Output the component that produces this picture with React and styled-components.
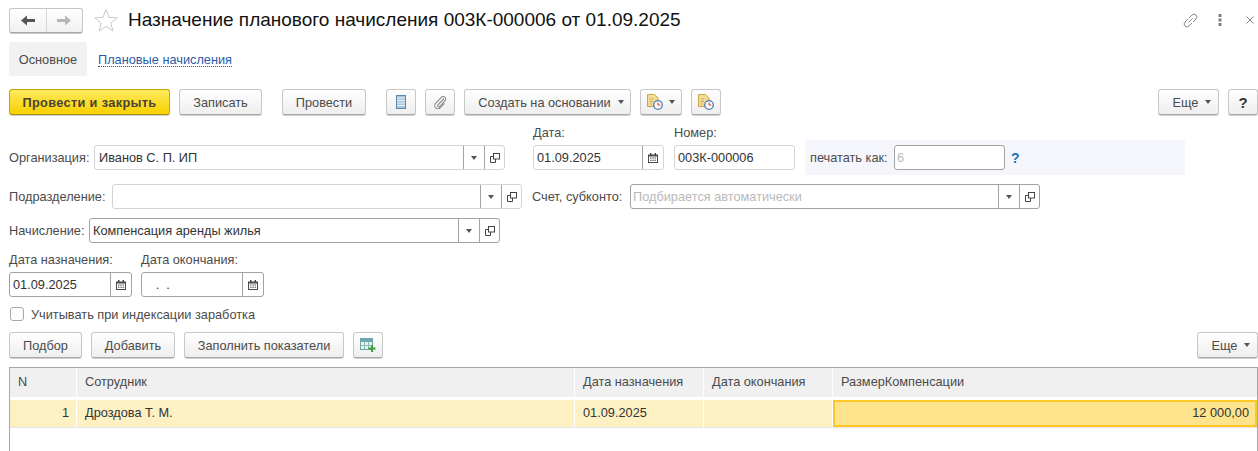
import React from 'react';
import styled, { createGlobalStyle } from 'styled-components';

const GlobalStyle = createGlobalStyle`
  html, body {
    margin: 0;
    height: 451px;
    overflow: hidden;
    background: #fff;
  }
  body {
    font-family: "Liberation Sans", Arial, sans-serif;
    font-size: 12.75px;
    color: #4b4b4b;
  }
  * { box-sizing: border-box; }
`;

const Page = styled.div`
  width: 1258px;
  height: 451px;
  padding-left: 9px;
  overflow: hidden;
`;

const TitleBar = styled.div`
  display: flex;
  align-items: center;
  height: 26px;
  margin-top: 7px;
`;

const NavGroup = styled.div`
  display: flex;
  width: 74px;
  height: 25px;
  border: 1px solid #c6c6c6;
  border-bottom-color: #a8a8a8;
  border-radius: 3px;
  background: linear-gradient(#ffffff, #f0f0f0);
  box-shadow: 0 1px 0 #c8c8c8;
`;

const NavButton = styled.div`
  flex: 1;
  display: flex;
  align-items: center;
  justify-content: center;
  & + & { border-left: 1px solid #d6d6d6; }
`;

const StarWrap = styled.div`
  display: flex;
  margin: 0 10px 0 11px;
`;

const Title = styled.h1`
  margin: 0;
  font-size: 19px;
  font-weight: 400;
  color: #111;
  white-space: nowrap;
`;

const WindowActions = styled.div`
  margin-left: auto;
  display: flex;
  align-items: center;
  gap: 19px;
  padding-right: 4px;
`;

const CloseWrap = styled.div`
  display: flex;
  margin-left: 5px;
`;

const Tabs = styled.div`
  display: flex;
  align-items: center;
  margin-top: 9px;
  height: 34px;
`;

const ActiveTab = styled.div`
  width: 78px;
  height: 34px;
  padding-top: 1px;
  display: flex;
  align-items: center;
  justify-content: center;
  background: #f1f1f1;
  border-radius: 3px;
`;

const TabLink = styled.a`
  margin: 2px 0 0 11px;
  color: #2a5ba8;
  border-bottom: 1px dotted #2a5ba8;
  line-height: 13px;
`;

const Toolbar = styled.div`
  display: flex;
  gap: 9px;
  margin-top: ${p => p.$top}px;
  height: 26px;
`;

const Button = styled.div`
  width: ${p => p.$w}px;
  height: 26px;
  flex: none;
  display: flex;
  align-items: center;
  justify-content: center;
  gap: ${p => p.$gap || 0}px;
  margin-left: ${p => p.$ml || '0'};
  padding-left: ${p => p.$pl || 0}px;
  border: 1px solid #c8c8c8;
  border-bottom-color: #a9a9a9;
  border-radius: 3px;
  background: linear-gradient(#ffffff, #eeeeee);
  box-shadow: 0 1px 0 #cfcfcf;
  white-space: nowrap;
`;

const PrimaryButton = styled(Button)`
  border-color: #c3a800;
  border-bottom-color: #a8920c;
  background: linear-gradient(#fdea5e, #f8d000);
  font-weight: 700;
  color: #4a4430;
  letter-spacing: 0.35px;
`;

const HelpMark = styled.span`
  font-size: 15px;
  font-weight: 700;
  color: #333;
`;

const Row = styled.div`
  display: flex;
  align-items: ${p => p.$align || 'center'};
  margin-top: ${p => p.$top}px;
`;

const Group = styled.div`
  display: flex;
  align-items: center;
`;

const Label = styled.span`
  flex: none;
  width: ${p => p.$w}px;
  white-space: nowrap;
  margin-left: ${p => p.$ml || 0}px;
`;

const Stack = styled.div`
  display: flex;
  flex-direction: column;
  gap: 4px;
  margin-left: ${p => p.$ml || 0}px;
`;

const StackLabel = styled.span`
  height: 16px;
  line-height: 16px;
`;

const FieldBox = styled.div`
  display: flex;
  flex: none;
  width: ${p => p.$w}px;
  height: 25px;
  border: 1px solid ${p => (p.$dark ? '#a3a3a3' : '#d4d4d4')};
  border-radius: 3px;
  background: #fff;
`;

const FieldValue = styled.div`
  flex: 1;
  min-width: 0;
  padding-left: ${p => p.$pad ?? 3}px;
  line-height: 23px;
  white-space: pre;
  color: ${p => (p.$hint ? '#b9b9b9' : '#333')};
`;

const FieldButton = styled.div`
  flex: none;
  width: ${p => p.$w}px;
  display: flex;
  align-items: center;
  justify-content: center;
  border-left: 1px solid #a3a3a3;
`;

const PrintPanel = styled.div`
  display: flex;
  align-items: center;
  width: 380px;
  height: 35px;
  margin: 0 0 -5px 10px;
  padding-left: 5px;
  background: #f5f6fc;
`;

const HintMark = styled.span`
  margin-left: 6px;
  font-size: 14px;
  font-weight: 700;
  color: #1c76b8;
`;

const CheckRow = styled.div`
  display: flex;
  align-items: center;
  gap: 7px;
  height: 14px;
  margin: 10px 0 0 1px;
`;

const CheckBox = styled.div`
  width: 14px;
  height: 14px;
  border: 1px solid #a8a8a8;
  border-radius: 3px;
  background: #fff;
`;

const Table = styled.div`
  width: 1249px;
  height: 90px;
  margin-top: 9px;
  border: 1px solid #a6a6a6;
  border-bottom: none;
`;

const Columns = styled.div`
  display: grid;
  grid-template-columns: 66px 497px 128px 128px 1fr;
  column-gap: 1px;
`;

const HeadRow = styled(Columns)`
  height: 29px;
  background: #fff;
`;

const HeadCell = styled.div`
  background: #f0f0f0;
  padding-left: 8px;
  line-height: 28px;
  white-space: nowrap;
`;

const BodyRow = styled(Columns)`
  margin-top: 3px;
  height: 28px;
  border-bottom: 1px solid #e6e6e6;
`;

const BodyCell = styled.div`
  background: #fdf1c4;
  padding: 0 ${p => (p.$right ? 7 : 8)}px;
  line-height: 26px;
  text-align: ${p => (p.$right ? 'right' : 'left')};
  color: #333;
  white-space: nowrap;
`;

const ActiveCell = styled.div`
  background: #fde38c;
  border: 2px solid #fdc825;
  padding-right: 6px;
  line-height: 22px;
  text-align: right;
  color: #333;
`;

const Triangle = () => (
  <svg width="6" height="4" viewBox="0 0 6 4"><path d="M0 0h6L3 4z" fill="#555" /></svg>
);

const OpenIcon = () => (
  <svg width="10" height="10" viewBox="0 0 10 10" fill="none" stroke="#444">
    <rect x="3.500" y="0.500" width="6" height="5.500" />
    <path d="M3.500 3.500H0.500V9.500H5.500V6" />
  </svg>
);

const CalendarIcon = () => (
  <svg width="10" height="10" viewBox="0 0 10 10">
    <path d="M2 0h1.500v1.500h3V0H8v1.500h2V10H0V1.500h2z" fill="#4a4a4a" />
    <rect x="1" y="3.500" width="8" height="5.500" fill="#fff" />
    <path d="M2 4.500h1.500v1H2zM4.300 4.500h1.500v1H4.300zM6.500 4.500H8v1H6.500zM2 6.800h1.500v1H2zM4.300 6.800h1.500v1H4.300zM6.500 6.800H8v1H6.500z" fill="#4a4a4a" />
  </svg>
);

const ArrowIcon = ({ left, color }) => (
  <svg width="14" height="11" viewBox="0 0 14 11" style={{ transform: left ? 'none' : 'scaleX(-1)' }}>
    <path d="M0 5.500L6 0.500V4H14V7H6V10.500z" fill={color} />
  </svg>
);

const StarIcon = () => (
  <svg width="24" height="24" viewBox="0 0 24 24" fill="#fff" stroke="#c9c9c9">
    <path d="M12 1.500l3 7.800 8.200 0.500-6.400 5.200 2.100 8-6.900-4.500-6.900 4.500 2.100-8L0.800 9.800 9 9.300z" />
  </svg>
);

const LinkIcon = () => (
  <svg width="17" height="17" viewBox="0 0 17 17" fill="none" stroke="#8a8a8a">
    <path d="M7 6l3-3a2.800 2.800 0 0 1 4 4l-3 3" />
    <path d="M10 11l-3 3a2.800 2.800 0 0 1-4-4l3-3" />
    <path d="M6.500 10.500l4-4" />
  </svg>
);

const DotsIcon = () => (
  <svg width="4" height="12" viewBox="0 0 4 12" fill="#808080">
    <rect x="0.500" y="0" width="3" height="3" />
    <rect x="0.500" y="4.500" width="3" height="3" />
    <rect x="0.500" y="9" width="3" height="3" />
  </svg>
);

const CloseIcon = () => (
  <svg width="8" height="8" viewBox="0 0 8 8" stroke="#808080" fill="none"><path d="M0.500 0.500l7 7M7.500 0.500l-7 7" /></svg>
);

const ListIcon = () => (
  <svg width="10" height="14" viewBox="0 0 10 14">
    <rect x="0.500" y="0.500" width="9" height="13" fill="#a9c6dc" stroke="#5f87a5" />
    <path d="M1 3h8M1 5.500h8M1 8h8M1 10.500h8" stroke="#e8f0f6" />
  </svg>
);

const ClipIcon = () => (
  <svg width="14" height="14" viewBox="0 0 14 14" fill="none" stroke="#8a8a8a" strokeWidth="1.100">
    <path d="M11 3.500L5 9.800a1.200 1.200 0 0 0 1.800 1.700l5.200-5.800a2.500 2.500 0 0 0-3.700-3.400L2.600 8.300a3.200 3.200 0 0 0 4.700 4.400l4.200-4.400" />
  </svg>
);

const DocClockIcon = () => (
  <svg width="16" height="16" viewBox="0 0 16 16">
    <path d="M0.500 0.500H7.500L11 4V12.500H0.500z" fill="#f3dc96" stroke="#c9a650" />
    <path d="M2.500 5h4M2.500 7.500h3.500M2.500 10h2.500" stroke="#cfae5e" />
    <circle cx="11" cy="11" r="4.300" fill="#fdf3f3" stroke="#4a7fb8" strokeWidth="1.300" />
    <path d="M11 8.500V11h2.200" stroke="#d0403a" fill="none" />
  </svg>
);

const TableAddIcon = () => (
  <svg width="16" height="14" viewBox="0 0 16 14">
    <rect x="0.500" y="0.500" width="12" height="11" fill="#e6f2f2" stroke="#6fa3a8" />
    <path d="M1 2.500h11" stroke="#6fa8aa" strokeWidth="3" />
    <path d="M4.500 4v7M8.500 4v7M1 7.500h11" stroke="#8fb8b8" />
    <path d="M8.500 10.500h7M12 7v7" stroke="#3fa12f" strokeWidth="2" />
  </svg>
);

// Поле ввода с кнопками выбора
const Field = ({ w, dark, value, hint, pad, select, calendar }) => (
  <FieldBox $w={w} $dark={dark}>
    <FieldValue $hint={hint} $pad={pad}>{value}</FieldValue>
    {select && <FieldButton $w={21}><Triangle /></FieldButton>}
    {select && <FieldButton $w={20}><OpenIcon /></FieldButton>}
    {calendar && <FieldButton $w={21}><CalendarIcon /></FieldButton>}
  </FieldBox>
);

const App = () => {
  return (
    <>
      <GlobalStyle />
      <Page>
        <TitleBar>
          <NavGroup>
            <NavButton><ArrowIcon left color="#555" /></NavButton>
            <NavButton><ArrowIcon color="#b5b5b5" /></NavButton>
          </NavGroup>
          <StarWrap><StarIcon /></StarWrap>
          <Title>Назначение планового начисления 003К-000006 от 01.09.2025</Title>
          <WindowActions>
            <LinkIcon />
            <DotsIcon />
            <CloseWrap><CloseIcon /></CloseWrap>
          </WindowActions>
        </TitleBar>

        <Tabs>
          <ActiveTab>Основное</ActiveTab>
          <TabLink>Плановые начисления</TabLink>
        </Tabs>

        <Toolbar $top={13}>
          <PrimaryButton $w={161}>Провести и закрыть</PrimaryButton>
          <Button $w={83}>Записать</Button>
          <Button $w={84} $ml="11px">Провести</Button>
          <Button $w={30} $ml="11px"><ListIcon /></Button>
          <Button $w={30}><ClipIcon /></Button>
          <Button $w={167} $gap={7} $pl={7}>Создать на основании <Triangle /></Button>
          <Button $w={42} $gap={6}><DocClockIcon /><Triangle /></Button>
          <Button $w={30}><DocClockIcon /></Button>
          <Button $w={61} $ml="auto" $gap={7} $pl={7}>Еще <Triangle /></Button>
          <Button $w={30}><HelpMark>?</HelpMark></Button>
        </Toolbar>

        <Row $top={10} $align="flex-end">
          <Group>
            <Label $w={85}>Организация:</Label>
            <Field w={411} value="Иванов С. П. ИП" pad={4} select />
          </Group>
          <Stack $ml={28}>
            <StackLabel>Дата:</StackLabel>
            <Field w={131} value="01.09.2025" calendar />
          </Stack>
          <Stack $ml={10}>
            <StackLabel>Номер:</StackLabel>
            <Field w={121} value="003К-000006" />
          </Stack>
          <PrintPanel>
            <Label $w={84}>печатать как:</Label>
            <Field w={111} dark hint value="6" pad={2} />
            <HintMark>?</HintMark>
          </PrintPanel>
        </Row>

        <Row $top={14}>
          <Label $w={103}>Подразделение:</Label>
          <Field w={410} select />
          <Label $ml={10} $w={98}>Счет, субконто:</Label>
          <Field w={410} dark hint value="Подбирается автоматически" pad={2} select />
        </Row>

        <Row $top={9}>
          <Label $w={80}>Начисление:</Label>
          <Field w={411} dark value="Компенсация аренды жилья" select />
        </Row>

        <Row $top={9}>
          <Stack>
            <StackLabel>Дата назначения:</StackLabel>
            <Field w={123} dark value="01.09.2025" calendar />
          </Stack>
          <Stack $ml={9}>
            <StackLabel>Дата окончания:</StackLabel>
            <Field w={123} dark value="   .  ." calendar />
          </Stack>
        </Row>

        <CheckRow>
          <CheckBox />
          Учитывать при индексации заработка
        </CheckRow>

        <Toolbar $top={11}>
          <Button $w={73}>Подбор</Button>
          <Button $w={84}>Добавить</Button>
          <Button $w={160}>Заполнить показатели</Button>
          <Button $w={30}><TableAddIcon /></Button>
          <Button $w={61} $ml="auto" $gap={7} $pl={7}>Еще <Triangle /></Button>
        </Toolbar>

        <Table>
          <HeadRow>
            <HeadCell>N</HeadCell>
            <HeadCell>Сотрудник</HeadCell>
            <HeadCell>Дата назначения</HeadCell>
            <HeadCell>Дата окончания</HeadCell>
            <HeadCell>РазмерКомпенсации</HeadCell>
          </HeadRow>
          <BodyRow>
            <BodyCell $right>1</BodyCell>
            <BodyCell>Дроздова Т. М.</BodyCell>
            <BodyCell>01.09.2025</BodyCell>
            <BodyCell />
            <ActiveCell>12 000,00</ActiveCell>
          </BodyRow>
        </Table>
      </Page>
    </>
  );
};

export default App;
